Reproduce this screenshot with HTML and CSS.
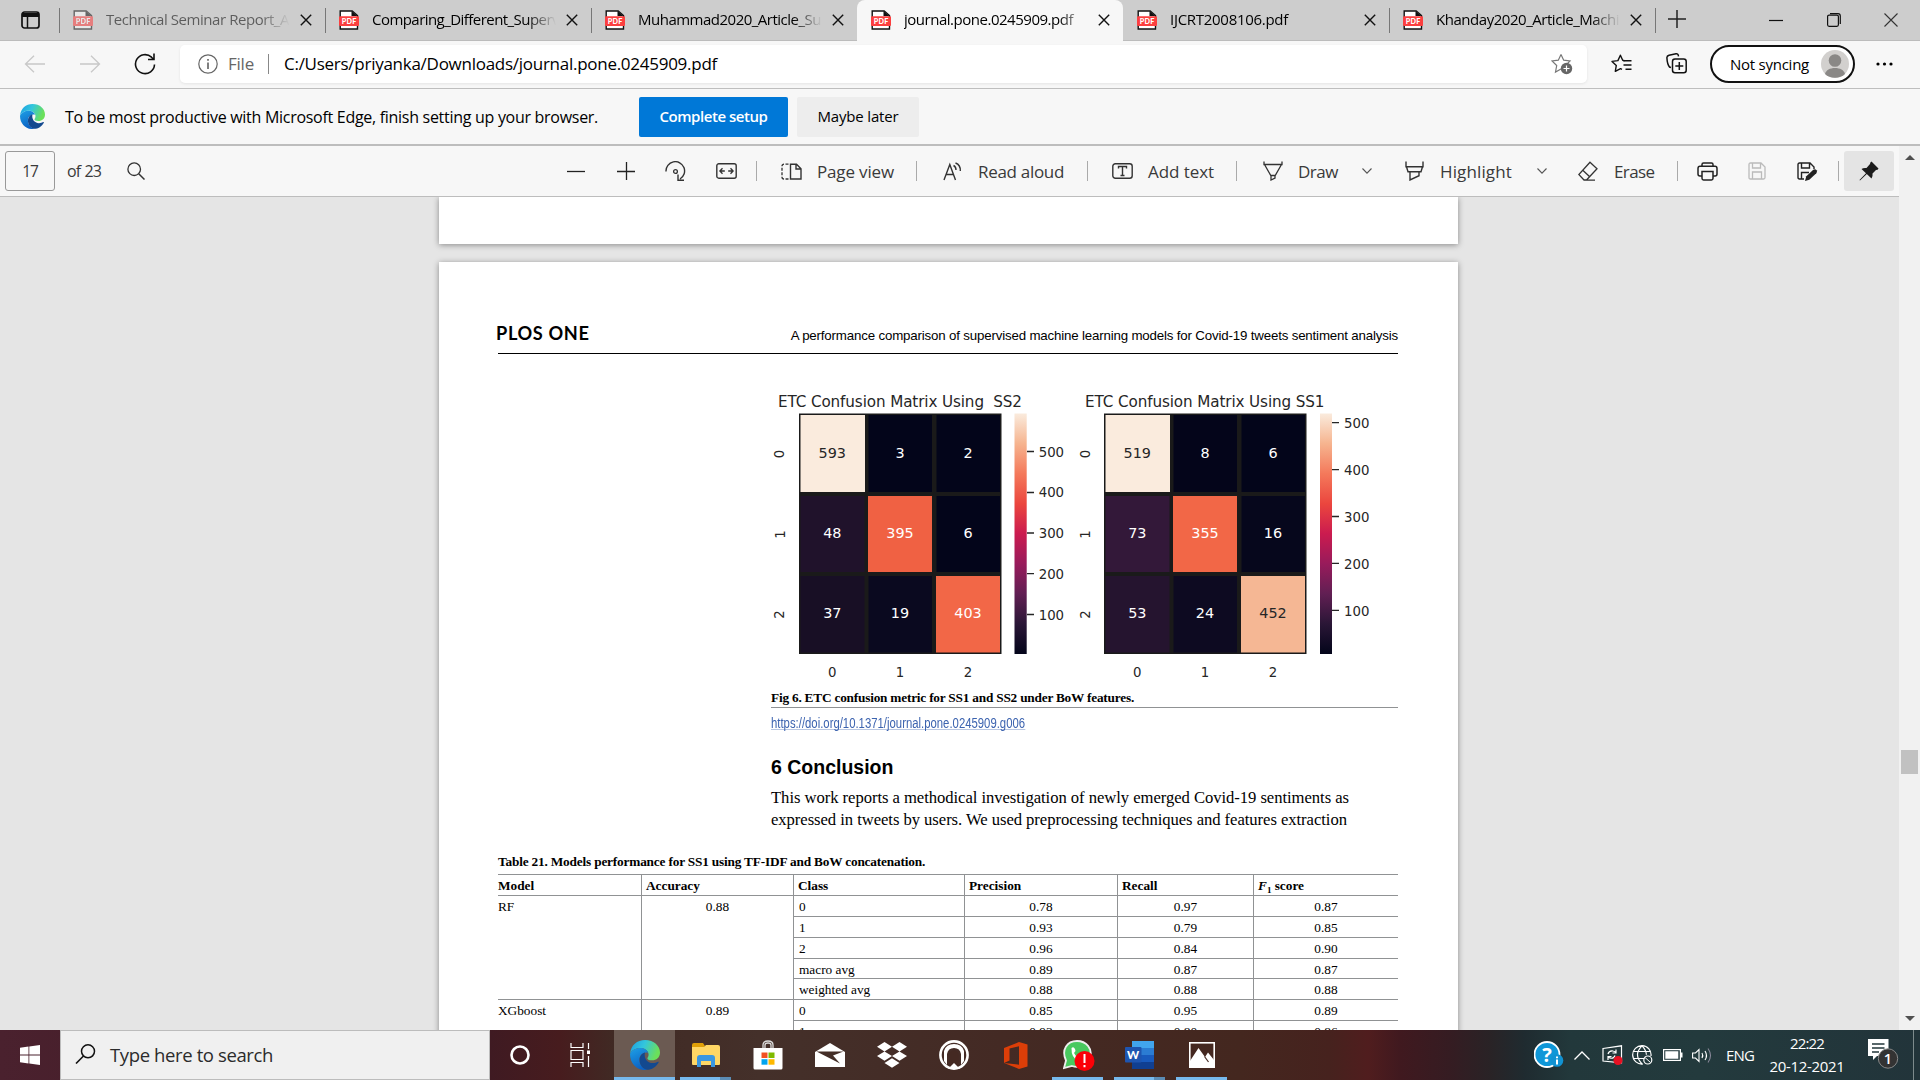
FILE: index.html
```
<!DOCTYPE html>
<html lang="en">
<head>
<meta charset="utf-8">
<title>journal.pone.0245909.pdf</title>
<link rel="stylesheet" href="styles.css">
</head>
<body>
<svg class="defs" width="0" height="0" aria-hidden="true">
  <defs>
    <symbol id="pdf" viewBox="0 0 20 20">
      <path d="M1.200 1h12l5.300 4.500V19H1.200z" fill="#fff" stroke="#111" stroke-width="1.400"/>
      <path d="M12.500 1v5h6z" fill="#111"/>
      <rect x="0" y="6.300" width="20" height="9.700" rx="1" fill="#fb3f3f"/>
      <text x="10" y="13.700" text-anchor="middle" textLength="14.500" font-family="Lato" font-weight="900" font-size="7.200" fill="#fff">PDF</text>
    </symbol>
    <symbol id="x" viewBox="0 0 12 12"><path d="M.8.8l10.400 10.400M11.200.8L.8 11.200" stroke="#111" stroke-width="1.400" fill="none"/></symbol>
    <symbol id="chev" viewBox="0 0 10 6"><path d="M.5.500L5 5.200 9.500.5" stroke="#555" stroke-width="1.100" fill="none"/></symbol>
    <linearGradient id="edgeA" x1="0" y1="0" x2="1" y2="0.300"><stop offset="0" stop-color="#1b9de2"/><stop offset=".5" stop-color="#33c6dd"/><stop offset="1" stop-color="#6be05a"/></linearGradient>
    <linearGradient id="edgeB" x1="0" y1="0" x2="0.400" y2="1"><stop offset="0" stop-color="#1ea0e6"/><stop offset="1" stop-color="#0b62c4"/></linearGradient>
    <symbol id="edge" viewBox="0 0 30 30">
      <path d="M0 14C1 5 7 0 15 0c9 0 15 6 15 12.500 0 5-3.500 7.800-8 7.800-3.500 0-4.600-1-4.600-1.800 0-.9 1.200-1.500 1.200-4C18.600 11 15 8 10.500 8 5.500 8 1.500 10.500 0 14z" fill="url(#edgeA)"/>
      <path d="M0 14c1.500-3.500 5.500-6 10.500-6 4 0 6.800 2.200 7.700 4.700-5-1-8.700 2.300-8.700 7 0 5.300 4 9.300 8.500 10.100C8 31.500 0 24.500 0 14z" fill="url(#edgeB)"/>
      <path d="M9.500 19.700c0-3.500 2.300-6.500 5.500-7.300-1.400 5.600 2.200 10.600 7.800 10.600 2 0 3.700-.5 5.200-1.300.5-.2.900.2.600.7-2.400 4.200-6.800 7.400-11.600 7.400-4.500-1-7.500-5.300-7.500-10.100z" fill="#13498f"/>
    </symbol>
    <linearGradient id="rocket" x1="0" y1="1" x2="0" y2="0">
      <stop offset="0" stop-color="#03051a"/><stop offset=".125" stop-color="#2a1636"/><stop offset=".25" stop-color="#611f53"/>
      <stop offset=".375" stop-color="#981b5b"/><stop offset=".5" stop-color="#cb1b4f"/><stop offset=".625" stop-color="#eb463e"/>
      <stop offset=".75" stop-color="#f4795b"/><stop offset=".875" stop-color="#f6b48f"/><stop offset="1" stop-color="#faebdd"/>
    </linearGradient>
  </defs>
</svg>

<header class="tabs">
  <div class="tab-actions"><svg width="19" height="18" viewBox="0 0 19 18"><rect x="1" y="1" width="17" height="16" rx="2.500" fill="none" stroke="#111" stroke-width="1.700"/><path d="M1 2h17v4H1z" fill="#111"/><path d="M6.500 5v12" stroke="#111" stroke-width="1.500"/></svg></div>
  <div class="tab dim"><svg class="pdf"><use href="#pdf"/></svg><span class="title"><i class="t-tab1">Technical Seminar Report_A</i></span><svg class="close"><use href="#x"/></svg></div>
  <div class="tab"><svg class="pdf"><use href="#pdf"/></svg><span class="title"><i class="t-tab2">Comparing_Different_Superv</i></span><svg class="close"><use href="#x"/></svg></div>
  <div class="tab"><svg class="pdf"><use href="#pdf"/></svg><span class="title"><i class="t-tab3">Muhammad2020_Article_Su</i></span><svg class="close"><use href="#x"/></svg></div>
  <div class="tab active"><svg class="pdf"><use href="#pdf"/></svg><span class="title"><i class="t-tab4">journal.pone.0245909.pdf</i></span><svg class="close"><use href="#x"/></svg></div>
  <div class="tab first"><svg class="pdf"><use href="#pdf"/></svg><span class="title"><i class="t-tab5">IJCRT2008106.pdf</i></span><svg class="close"><use href="#x"/></svg></div>
  <div class="tab"><svg class="pdf"><use href="#pdf"/></svg><span class="title"><i class="t-tab6">Khanday2020_Article_Machi</i></span><svg class="close"><use href="#x"/></svg></div>
  <div class="new-tab"><svg width="18" height="18" viewBox="0 0 18 18"><path d="M9 0v18M0 9h18" stroke="#222" stroke-width="1.500"/></svg></div>
  <div class="win"><svg width="14" height="14" viewBox="0 0 14 14"><path d="M0 7.500h14" stroke="#111" stroke-width="1.200"/></svg>
  <svg width="14" height="14" viewBox="0 0 14 14"><rect x=".6" y="2.100" width="10.800" height="11.200" rx="1.500" fill="none" stroke="#111" stroke-width="1.200"/><path d="M3 .6h8a2.300 2.300 0 0 1 2.300 2.300V11" fill="none" stroke="#111" stroke-width="1.200"/></svg>
  <svg width="14" height="14" viewBox="0 0 14 14"><path d="M.5.500l13 13M13.500.5l-13 13" stroke="#333" stroke-width="1.100"/></svg></div>
</header>

<nav class="address">
  <svg width="22" height="18" viewBox="0 0 22 18"><path d="M21 9H1.500M10 .7L1.500 9l8.500 8.300" fill="none" stroke="#c8c8c8" stroke-width="1.300"/></svg>
  <svg width="22" height="18" viewBox="0 0 22 18"><path d="M1 9h19.500M12 .7L20.500 9 12 17.300" fill="none" stroke="#c8c8c8" stroke-width="1.300"/></svg>
  <svg width="22" height="22" viewBox="0 0 22 22"><path d="M20.500 11.500a9.500 9.500 0 1 1-3-7.300l2 2M20 .5v6h-6" fill="none" stroke="#111" stroke-width="1.600"/></svg>
  <div class="url">
    <svg width="20" height="20" viewBox="0 0 20 20"><circle cx="10" cy="10" r="9.200" fill="none" stroke="#666" stroke-width="1.200"/><path d="M10 8.500v6.500M10 5v1.700" stroke="#555" stroke-width="1.500"/></svg>
    <span class="file">File</span><b class="bar"></b><span class="path">C:/Users/priyanka/Downloads/journal.pone.0245909.pdf</span>
    <svg class="fav" width="22" height="22" viewBox="0 0 22 22"><path d="M10 1.500l2.700 5.700 6.300.8-3 3M10 16l-5.500 3 1.200-6.500L1 8l6.300-.8L10 1.500" fill="none" stroke="#777" stroke-width="1.200"/><circle cx="15.500" cy="15.500" r="5.700" fill="#666"/><path d="M15.500 12.500v6M12.500 15.500h6" stroke="#fff" stroke-width="1.200"/></svg>
  </div>
  <svg width="21" height="20" viewBox="0 0 21 20"><path d="M13.500 6.700l-1.800-.4L9.400 1.200 6.900 6.600l-5.900.8 4.300 4-1 6 5.200-2.800 1.500.8" fill="none" stroke="#111" stroke-width="1.400" stroke-linejoin="round"/><path d="M12.500 6.800h8M12.500 11h8M14.500 15.200h6" stroke="#111" stroke-width="1.400"/></svg>
  <svg width="21" height="21" viewBox="0 0 21 21"><rect x="6.500" y="6" width="13.700" height="13.800" rx="2.500" fill="none" stroke="#111" stroke-width="1.500"/><path d="M13.300 9v8M9.300 13h8M5 14.500L3.500 14C1 11 1 6 .9 4.500 1 3 2 2.500 3 2.200L10 .8c1.500-.2 2.300.7 2.500 2.500" fill="none" stroke="#111" stroke-width="1.500"/></svg>
  <div class="profile"><span>Not syncing</span><svg width="28" height="28" viewBox="0 0 28 28"><circle cx="14" cy="14" r="14" fill="#d2d0ce"/><circle cx="14" cy="10.500" r="6.300" fill="#8a8886"/><path d="M4 24c1-4 5-6 10-6s9 2 10 6c-5 5-15 5-20 0z" fill="#8a8886"/></svg></div>
  <svg width="17" height="4" viewBox="0 0 17 4"><circle cx="2" cy="2" r="1.600"/><circle cx="8.500" cy="2" r="1.600"/><circle cx="15" cy="2" r="1.600"/></svg>
</nav>

<section class="infobar">
  <svg width="25" height="25"><use href="#edge"/></svg>
  <span class="msg">To be most productive with Microsoft Edge, finish setting up your browser.</span>
  <span class="btn primary">Complete setup</span>
  <span class="btn later">Maybe later</span>
</section>

<main class="viewer">
  <div class="content">
    <div class="pdfbar">
      <span class="pageno">17</span>
      <span class="t-of">of 23</span>
      <svg width="18" height="18" viewBox="0 0 18 18"><circle cx="7.200" cy="7.200" r="6.300" fill="none" stroke="#333" stroke-width="1.300"/><path d="M11.700 11.700l5.800 5.800" stroke="#333" stroke-width="1.500"/></svg>
      <svg width="18" height="18" viewBox="0 0 18 18"><path d="M0 9.500h18" stroke="#222" stroke-width="1.300"/></svg>
      <svg width="18" height="18" viewBox="0 0 18 18"><path d="M0 9.500h18M9.500 0v18" stroke="#222" stroke-width="1.300"/></svg>
      <svg width="21" height="20" viewBox="0 0 21 20"><path d="M1 10.500a9.300 9.300 0 1 1 14 7.500M13 13.500v5.700h6" fill="none" stroke="#333" stroke-width="1.400"/><circle cx="10.500" cy="10.500" r="1.900" fill="none" stroke="#333" stroke-width="1.300"/></svg>
      <svg width="21" height="16" viewBox="0 0 21 16"><rect x=".8" y=".8" width="19.400" height="14.400" rx="2" fill="none" stroke="#333" stroke-width="1.400"/><path d="M4 8h4.800M6.500 5.300L3.900 8l2.600 2.700M17 8h-4.800M14.500 5.300L17.100 8l-2.600 2.700" fill="none" stroke="#333" stroke-width="1.300"/></svg>
      <b class="sep"></b>
      <svg width="21" height="17" viewBox="0 0 21 17"><path d="M9.500 1.200h6l4.500 4.500V16H9.500zM15 1v5h5" fill="none" stroke="#333" stroke-width="1.400"/><path d="M7.500 1.200H3a2 2 0 0 0-2 2V14a2 2 0 0 0 2 2h4.500" fill="none" stroke="#333" stroke-width="1.300" stroke-dasharray="3 1.500"/></svg>
      <span class="t-pv">Page view</span>
      <b class="sep"></b>
      <svg width="20" height="19" viewBox="0 0 20 19"><path d="M1 18L6.800 2.500 12.500 18M3 12.500h7.700M10.500 3.500c2 .8 2.500 3 2.500 4.500M12.500 1c4 1.500 5 5 4.800 8" fill="none" stroke="#333" stroke-width="1.400"/></svg>
      <span class="t-ra">Read aloud</span>
      <b class="sep"></b>
      <svg width="21" height="16" viewBox="0 0 21 16"><rect x=".8" y=".8" width="19.400" height="14.400" rx="2.500" fill="none" stroke="#333" stroke-width="1.400"/><path d="M6.500 5.500v-2h8v2M10.500 3.500v9M8.500 12.500h4" fill="none" stroke="#333" stroke-width="1.400"/></svg>
      <span class="t-at">Add text</span>
      <b class="sep"></b>
      <svg width="20" height="20" viewBox="0 0 20 20"><path d="M1 .5v3h18v-3M1.500 3.500L8 15v4l4-2v-2l6.500-11.500M8 14.500h4" fill="none" stroke="#333" stroke-width="1.300"/></svg>
      <span class="t-dr">Draw</span>
      <svg width="10" height="6"><use href="#chev"/></svg>
      <svg width="19" height="20" viewBox="0 0 19 20"><path d="M1 .5v5.200h17V.5M1.500 5.700l1.500 5h13l1.500-5M5 10.700V19l9-4.300v-4" fill="none" stroke="#333" stroke-width="1.400"/></svg>
      <span class="t-hi">Highlight</span>
      <svg width="10" height="6"><use href="#chev"/></svg>
      <svg width="20" height="20" viewBox="0 0 20 20"><path d="M12 1.200l7 6.500L8.500 19H6L.8 13.500zM4.500 9l7.500 7M8 19.200h9" fill="none" stroke="#333" stroke-width="1.300"/></svg>
      <span class="t-er">Erase</span>
      <b class="sep"></b>
      <svg width="21" height="19" viewBox="0 0 21 19"><path d="M5 4V2.500Q5 1 6.500 1h8Q16 1 16 2.500V4M5 14H3q-2 0-2-2V6.500Q1 4.300 3 4.300h15q2 0 2 2.200V12q0 2-2 2h-2M5 9.500h11v6.800q0 1.700-1.500 1.700h-8Q5 18 5 16.300z" fill="none" stroke="#222" stroke-width="1.500"/></svg>
      <svg width="18" height="18" viewBox="0 0 18 18"><path d="M1 2.500Q1 1 2.500 1H13l4 4v10.500q0 1.500-1.500 1.500h-13Q1 17 1 15.500zM4.500 1v5h8V1M4.500 17v-7h9v7" fill="none" stroke="#bbb" stroke-width="1.300"/></svg>
      <svg width="21" height="19" viewBox="0 0 21 19"><path d="M7 17H2.500Q1 17 1 15.500v-13Q1 1 2.500 1H13l4 4v2M4.500 1v5h8V1M4.500 17v-6.500H12" fill="none" stroke="#222" stroke-width="1.400"/><path d="M8 19l1.300-4.800 7-6.500q2-1 3.300.5 1 1.600-.3 3l-7 6.600z" fill="#222"/></svg>
      <b class="sep"></b>
      <span class="pin"><svg width="20" height="20" viewBox="0 0 20 20"><path d="M12.500.5l7 7q-.5 1.500-2.500 1.500l-3.500 3.500q.5 3-1 5L7.800 13 1 19.500.5 19 7 12.200 2.500 8q2-1.500 5-1L11 3Q11 1 12.500.5z" fill="#1b1b1b"/></svg></span>
    </div>

    <div class="pages">
      <div class="page prev"></div>
      <article class="page">
        <header class="runhead"><span class="plos">PLOS ONE</span><span class="rh">A performance comparison of supervised machine learning models for Covid-19 tweets sentiment analysis</span></header>
        <div class="col">
          <svg class="figure" width="627" height="336" viewBox="771 354 627 336">
            <text class="ct" x="778" y="406.500" textLength="244" xml:space="preserve">ETC Confusion Matrix Using  SS2</text>
            <rect x="799" y="413.500" width="202.500" height="240.500" fill="#1a1a1a"/>
            <g>
              <rect x="800.500" y="415" width="64.500" height="77" fill="#faebdd"/><rect x="868.500" y="415" width="63.500" height="77" fill="#03051a"/><rect x="936.500" y="415" width="63.500" height="77" fill="#03051a"/>
              <rect x="800.500" y="496" width="64" height="76" fill="#20122b"/><rect x="868" y="496" width="64" height="76" fill="#f06143"/><rect x="936.500" y="496" width="63.500" height="76" fill="#03051a"/>
              <rect x="800.500" y="576" width="64" height="76.500" fill="#180f25"/><rect x="868.500" y="576" width="63.500" height="76.500" fill="#0a091f"/><rect x="936" y="576" width="64" height="76.500" fill="#f26747"/>
            </g>
            <g class="cv"><text class="dk" x="832.300" y="458">593</text><text x="900" y="458">3</text><text x="968" y="458">2</text><text x="832.300" y="538.300">48</text><text x="900" y="538.300">395</text><text x="968" y="538.300">6</text><text x="832.300" y="618.300">37</text><text x="900" y="618.300">19</text><text x="968" y="618.300">403</text></g>
            <g class="ax"><text x="832.300" y="676.500">0</text><text x="900" y="676.500">1</text><text x="968" y="676.500">2</text>
              <text transform="translate(784 454) rotate(-90)">0</text><text transform="translate(785 534.500) rotate(-90)">1</text><text transform="translate(784 614.500) rotate(-90)">2</text></g>
            <rect x="1014.500" y="413.500" width="12.200" height="240.500" fill="url(#rocket)"/>
            <path d="M1027 451.500h7M1027 492.500h7M1027 533h7M1027 573.700h7M1027 614.500h7" stroke="#262626" stroke-width="1.300"/>
            <g class="tk"><text x="1038.700" y="456.800">500</text><text x="1038.700" y="497.300">400</text><text x="1038.700" y="538">300</text><text x="1038.700" y="578.800">200</text><text x="1038.700" y="619.500">100</text></g>

            <text class="ct" x="1085" y="406.500" textLength="239.500">ETC Confusion Matrix Using SS1</text>
            <rect x="1104" y="413.500" width="202.500" height="240.500" fill="#1a1a1a"/>
            <g>
              <rect x="1105.500" y="415" width="64.500" height="77" fill="#faebdd"/><rect x="1173.500" y="415" width="63.500" height="77" fill="#04051a"/><rect x="1241.500" y="415" width="63.500" height="77" fill="#03051a"/>
              <rect x="1105.500" y="496" width="64" height="76" fill="#331839"/><rect x="1173" y="496" width="64" height="76" fill="#f26747"/><rect x="1241.500" y="496" width="63.500" height="76" fill="#06071c"/>
              <rect x="1105.500" y="576" width="64" height="76.500" fill="#25142f"/><rect x="1173.500" y="576" width="63.500" height="76.500" fill="#0d0a21"/><rect x="1241" y="576" width="64" height="76.500" fill="#f5b794"/>
            </g>
            <g class="cv"><text class="dk" x="1137.300" y="458">519</text><text x="1205" y="458">8</text><text x="1273" y="458">6</text><text x="1137.300" y="538.300">73</text><text x="1205" y="538.300">355</text><text x="1273" y="538.300">16</text><text x="1137.300" y="618.300">53</text><text x="1205" y="618.300">24</text><text class="dk" x="1273" y="618.300">452</text></g>
            <g class="ax"><text x="1137.300" y="676.500">0</text><text x="1205" y="676.500">1</text><text x="1273" y="676.500">2</text>
              <text transform="translate(1089.500 454) rotate(-90)">0</text><text transform="translate(1090 534.500) rotate(-90)">1</text><text transform="translate(1089.500 614.500) rotate(-90)">2</text></g>
            <rect x="1320" y="413.500" width="12" height="240.500" fill="url(#rocket)"/>
            <path d="M1332 422.700h7M1332 469.700h7M1332 516.500h7M1332 563.300h7M1332 610.300h7" stroke="#262626" stroke-width="1.300"/>
            <g class="tk"><text x="1344" y="428">500</text><text x="1344" y="475">400</text><text x="1344" y="521.800">300</text><text x="1344" y="568.700">200</text><text x="1344" y="615.500">100</text></g>
          </svg>
          <p class="figcap">Fig 6. ETC confusion metric for SS1 and SS2 under BoW features.</p>
          <p class="doi"><span>https://doi.org/10.1371/journal.pone.0245909.g006</span></p>
          <h2>6 Conclusion</h2>
          <p class="para">This work reports a methodical investigation of newly emerged Covid-19 sentiments as<br>expressed in tweets by users. We used preprocessing techniques and features extraction</p>
        </div>
        <p class="tabcap">Table 21. Models performance for SS1 using TF-IDF and BoW concatenation.</p>
        <table>
          <colgroup><col class="c1"><col class="c2"><col class="c3"><col class="c4"><col class="c5"><col class="c6"></colgroup>
          <tr><th>Model</th><th>Accuracy</th><th>Class</th><th>Precision</th><th>Recall</th><th><em>F</em><sub>1</sub> score</th></tr>
          <tr><td rowspan="5">RF</td><td rowspan="5" class="n">0.88</td><td>0</td><td class="n">0.78</td><td class="n">0.97</td><td class="n">0.87</td></tr>
          <tr><td>1</td><td class="n">0.93</td><td class="n">0.79</td><td class="n">0.85</td></tr>
          <tr><td>2</td><td class="n">0.96</td><td class="n">0.84</td><td class="n">0.90</td></tr>
          <tr class="short"><td>macro avg</td><td class="n">0.89</td><td class="n">0.87</td><td class="n">0.87</td></tr>
          <tr><td>weighted avg</td><td class="n">0.88</td><td class="n">0.88</td><td class="n">0.88</td></tr>
          <tr><td rowspan="2">XGboost</td><td rowspan="2" class="n">0.89</td><td>0</td><td class="n">0.85</td><td class="n">0.95</td><td class="n">0.89</td></tr>
          <tr><td>1</td><td class="n">0.93</td><td class="n">0.80</td><td class="n">0.86</td></tr>
        </table>
      </article>
    </div>
  </div>
  <div class="scroll"><i class="up"></i><i class="thumb"></i><i class="down"></i></div>
</main>

<footer class="taskbar">
  <div class="start"><svg width="20" height="20" viewBox="0 0 20 20"><path d="M0 2.800l8.500-1.200v8H0zM9.300 1.500L20 0v9.600H9.300zM0 10.400h8.500v8L0 17.200zM9.300 10.400H20V20L9.300 18.500z" fill="#fff"/></svg></div>
  <div class="search"><svg width="21" height="20" viewBox="0 0 21 20"><circle cx="13" cy="7.300" r="6.500" fill="none" stroke="#111" stroke-width="1.500"/><path d="M8.500 12L1 19.500" stroke="#111" stroke-width="1.600"/></svg><span>Type here to search</span></div>
  <div class="app cort"><svg width="20" height="20" viewBox="0 0 20 20"><circle cx="10" cy="10" r="8.500" fill="none" stroke="#fff" stroke-width="2.600"/></svg></div>
  <div class="app tv"><svg width="21" height="24" viewBox="0 0 21 24"><path d="M1 0v4.500h12V0M1 7.500h12v9H1zM1 24v-4.500h12V24M18.500 0v6M18.500 13v11" fill="none" stroke="#fff" stroke-width="1.200"/><path d="M17 7.500h3v3.500h-3z" fill="#fff"/></svg></div>
  <div class="app on wide"><svg width="30" height="30"><use href="#edge"/></svg></div>
  <div class="app run more"><svg width="28" height="24" viewBox="0 0 28 24"><path d="M0 2q0-2 2-2h9l2 3-2 4H0z" fill="#e0a008"/><path d="M0 4h12l2-2h12q2 0 2 2v17q0 1-1 1H1q-1 0-1-1z" fill="#ffd765"/><path d="M5 24V15q0-3 3-3h12q3 0 3 3v9h-4v-6H9v6z" fill="#3b97e0"/></svg></div>
  <div class="app"><svg width="30" height="30" viewBox="0 0 30 30"><path d="M10 8V5q0-4 5-4t5 4v3M12 8V5q0-2 3-2t3 2v3" fill="none" stroke="#ddd" stroke-width="1.300"/><path d="M.5 8h29v20q0 1.500-1.500 1.500H2Q.5 29.500.5 28z" fill="#fff"/><path d="M8.500 12.500h6v5.500h-6z" fill="#f25022"/><path d="M15.500 12.500h6v5.500h-6z" fill="#7fba00"/><path d="M8.500 19.200h6v5.500h-6z" fill="#00a4ef"/><path d="M15.500 19.200h6v5.500h-6z" fill="#ffb900"/></svg></div>
  <div class="app"><svg width="30" height="24" viewBox="0 0 30 24"><path d="M0 9L15 0l15 9v15H0z" fill="#fff"/><path d="M1.500 8.500h27L18 12.500l7 8z" fill="#442e27"/></svg></div>
  <div class="app"><svg width="30" height="26" viewBox="0 0 30 26"><path d="M7.500 0L15 4.700 7.500 9.400 0 4.700zM22.500 0L30 4.700l-7.500 4.700L15 4.700zM7.500 9.400L15 14.100 7.500 18.800 0 14.100zM22.500 9.400L30 14.100l-7.500 4.700L15 14.100zM15 16.300l7.500 4.700L15 25.700 7.500 21z" fill="#fff"/></svg></div>
  <div class="app"><svg width="30" height="30" viewBox="0 0 30 30"><circle cx="15" cy="15" r="13.600" fill="none" stroke="#fff" stroke-width="2.600"/><path d="M5 21V11q2-7 10-7t10 7v10l-3 4V14q-1-6-7-6t-7 6v11z" fill="#fff"/><path d="M10.500 26V14q1-3.500 4.500-3.500t4.500 3.500v12L15 22z" fill="#442922"/><path d="M9 29l6-6 6 6z" fill="#fff"/></svg></div>
  <div class="app"><svg width="24" height="27" viewBox="0 0 24 27"><path d="M0 6L15 0l8.500 2.500v22L15 27 0 21l15 1.700V4.300L5.500 6.500v12L0 21z" fill="#dc3e08"/></svg></div>
  <div class="app run wa"><svg width="32" height="31" viewBox="0 0 32 31"><path d="M1 28l2-7.500C-2 10 4 1 14 1s15 8 13.500 15S18 29 9 26z" fill="#48c95f" stroke="#eee" stroke-width="1.800"/><path d="M8.500 8q2-2 3.500 1l.5 2-1.500 2q2 4 5 5.500l2-1.500 3 1.500q-1 4-5 3Q8 18 8.500 8z" fill="#fff"/><circle cx="21.500" cy="21" r="10" fill="#fb0007"/><path d="M21.500 14v9M21.500 25v2.300" stroke="#fff" stroke-width="2"/></svg></div>
  <div class="app run more"><svg width="30" height="28" viewBox="0 0 30 28"><path d="M7 0h22v7H7z" fill="#41a5ee"/><path d="M7 7h22v7H7z" fill="#2b7cd3"/><path d="M7 14h22v7H7z" fill="#185abd"/><path d="M7 21h22v7H7z" fill="#103f91"/><rect y="6" width="16.500" height="15.500" rx="1" fill="#1e55b0"/><text x="8.200" y="18" text-anchor="middle" font-family="Lato" font-weight="900" font-size="11.500" fill="#fff">W</text></svg></div>
  <div class="app run"><svg width="26" height="26" viewBox="0 0 26 26"><rect x=".8" y=".8" width="24.400" height="24.400" fill="none" stroke="#fff" stroke-width="1.600"/><path d="M1 19L9.500 6l6.500 9 3-4.500L25 18v7H1z" fill="#fff"/><path d="M15.500 14.500l4 5.500" stroke="#442922" stroke-width="1.200"/></svg></div>
  <div class="tray">
    <svg width="30" height="28" viewBox="0 0 30 28"><circle cx="13" cy="13.500" r="12.500" fill="#0f97d8" stroke="#fff" stroke-width="1.800"/><text x="13" y="21" text-anchor="middle" font-family="Open Sans" font-weight="700" font-size="20" fill="#fff">?</text><circle cx="23" cy="19.500" r="6.300" fill="#1192d2"/><path d="M23 18.500v5M23 15.500v1.700" stroke="#fff" stroke-width="2"/></svg>
    <svg width="16" height="9" viewBox="0 0 16 9"><path d="M.5 8.500L8 1l7.500 7.500" fill="none" stroke="#fff" stroke-width="1.300"/></svg>
    <svg width="21" height="20" viewBox="0 0 21 20"><path d="M1 3.500L19.500.8v17L1 16z" fill="none" stroke="#fff" stroke-width="1.200"/><path d="M6 9q1-3.500 5-3 2 .2 3 2M14 4.500V8h-3.500M13 10.500q-1 3-4 2.700-2-.2-2.800-1.700M6 15v-3.500h3.500" fill="none" stroke="#fff" stroke-width="1.200"/><circle cx="16" cy="15.500" r="4.500" fill="#e81123"/></svg>
    <svg width="21" height="20" viewBox="0 0 21 20"><path d="M11 19A9.200 9.200 0 1 1 19 11M1.500 6.500h17M1.500 13.500h11M10 .8c-6 6-6 12 0 18M10 .8c3 3 4.300 6 4.400 9" fill="none" stroke="#fff" stroke-width="1.200"/><circle cx="15.800" cy="15" r="4" fill="none" stroke="#fff" stroke-width="1.200"/><path d="M13 12.500l5.500 5" stroke="#fff"/></svg>
    <svg width="20" height="12" viewBox="0 0 20 12"><rect x=".6" y=".6" width="16.800" height="10.800" fill="none" stroke="#fff" stroke-width="1.200"/><path d="M2.300 2.300h13v7.400h-13zM18 3.500h1.500v5H18z" fill="#fff"/></svg>
    <svg width="20" height="17" viewBox="0 0 20 17"><path d="M.6 6h2.900L7 2.500v12L3.500 11H.6z" fill="none" stroke="#fff" stroke-width="1.100"/><path d="M10 6q1.500 2.500 0 5M13 4q3 4.500 0 9" fill="none" stroke="#fff" stroke-width="1.100"/><path d="M16 1.500q5 7 0 14" fill="none" stroke="#889" stroke-width="1.100"/></svg>
    <span class="t-eng">ENG</span>
    <div class="clock"><span class="t-time">22:22</span><span class="t-date">20-12-2021</span></div>
    <svg width="31" height="32" viewBox="0 0 31 32"><path d="M0 0h20.500v17H9l-4 4v-4H0z" fill="#fff"/><path d="M4 5h12.500M4 9h12.500M4 13h7" stroke="#22363a" stroke-width="1.300"/><circle cx="20" cy="19.500" r="9.700" fill="#333" stroke="#888" stroke-width="1"/><text x="20" y="25" text-anchor="middle" font-family="Open Sans" font-weight="600" font-size="14.500" fill="#fff">1</text></svg>
    <b class="desk"></b>
  </div>
</footer>
</body>
</html>
```
FILE: styles.css
```
* { box-sizing: border-box; }
body { margin: 0; width: 1920px; height: 1080px; overflow: hidden; display: flex; flex-direction: column; background: #f7f7f7; font-family: "Open Sans", sans-serif; color: #000; }
.defs { position: absolute; }
svg { display: block; flex: none; }
i { font-style: normal; }
span { white-space: nowrap; }

/* Tab strip */
.tabs { height: 41px; flex: none; display: flex; align-items: flex-start; background: #cdcdcd; border-bottom: 1px solid #bcbcbc; font-size: 15px; }
.tab-actions { width: 59px; height: 40px; padding: 11px 0 0 21px; }
.tab { width: 266px; height: 40px; display: flex; align-items: center; position: relative; padding: 0 0 2px 14px; }
.tab::before { content: ""; position: absolute; left: 0; top: 8px; width: 1px; height: 25px; background: #777; }
.pdf { width: 20px; height: 20px; margin-top: 1px; }
.title { width: 184px; margin-left: 13px; overflow: hidden; line-height: 24px; -webkit-mask-image: linear-gradient(90deg, #000 155px, transparent 184px); mask-image: linear-gradient(90deg, #000 155px, transparent 184px); }
.tab .close { width: 12px; height: 12px; margin: 2px 0 0 10px; }
.dim .pdf, .dim .title { opacity: .55; }
.active { background: #f7f7f7; height: 41px; border-radius: 8px 8px 0 0; padding-bottom: 3px; }
.active::before, .first::before { display: none; }
.new-tab { width: 60px; height: 40px; padding: 10px 0 0 13px; position: relative; }
.new-tab::before { content: ""; position: absolute; left: 0; top: 8px; width: 1px; height: 25px; background: #777; }
.win { margin-left: 54px; height: 39px; display: flex; align-items: center; gap: 43.500px; }
.t-tab1 { letter-spacing: -.445px; }
.t-tab2 { letter-spacing: -.547px; }
.t-tab3 { letter-spacing: -.501px; }
.t-tab4 { letter-spacing: -.481px; }
.t-tab5 { letter-spacing: -.286px; }
.t-tab6 { letter-spacing: -.461px; }

/* Address bar */
.address { height: 48px; flex: none; display: grid; grid-template-columns: 55px 55px 46px 1431px 55px 44px 166px 46px; align-items: center; padding: 0 0 2px 24px; border-bottom: 1px solid #bebebe; }
.url { width: 1407px; height: 38px; background: #fff; border-radius: 5px; display: flex; align-items: center; padding-left: 18px; box-shadow: 0 1px 3px rgba(0,0,0,.08); }
.address .url { width: 1407px; }
.address > .url + svg { margin-left: 0; }
.file { margin-left: 10px; color: #666; font-size: 17px; width: 27px; letter-spacing: -.227px; }
.bar { width: 1px; height: 20px; background: #888; margin: 0 15px 0 13px; }
.path { font-size: 17px; letter-spacing: -.267px; }
.fav { margin-left: auto; margin-right: 14px; }
.profile { width: 145px; height: 38px; border: 2px solid #111; border-radius: 19px; display: flex; align-items: center; justify-content: space-between; padding: 0 4px 0 18px; background: #fff; font-size: 15px; letter-spacing: -.25px; }

/* Setup message */
.infobar { height: 57px; flex: none; display: flex; align-items: center; padding-left: 20px; border-bottom: 2px solid #bdbdbd; font-size: 16px; }
.msg { width: 533px; margin: 0 41px 0 20px; letter-spacing: -.287px; }
.btn { height: 40px; line-height: 39px; width: 122px; background: #ededed; border-radius: 2px; text-align: center; font-size: 15px; font-weight: 600; }
.btn.primary { width: 149px; margin-right: 9px; background: #0078d7; color: #fff; letter-spacing: -.454px; }
.btn.later { font-weight: 500; letter-spacing: -.169px; }

/* Viewer */
.viewer { flex: none; height: 884px; display: flex; }
.content { width: 1899px; display: flex; flex-direction: column; background: #e5e5e5; overflow: hidden; }
.pdfbar { height: 51px; flex: none; background: #f7f7f7; border-bottom: 1px solid #bdbdbd; padding-left: 5px; display: grid; align-items: center; font-size: 17px; color: #3a3a3a;
  grid-template-columns: 62px 60px 440px 50px 48px 51px 40px 25px 36px 99px 27px 35px 109px 25px 36px 88px 27px 35px 64px 43px 35px 97px 41px 36px 63px 20px 51px 49px 41px 6px 50px; }
.pageno { width: 50px; height: 40px; line-height: 38px; border: 1px solid #999; border-radius: 3px; text-align: center; font-size: 15.500px; letter-spacing: -1px; }
.t-of { font-size: 16px; letter-spacing: -.88px; word-spacing: 1px; }
.t-pv { letter-spacing: -.153px; }
.t-ra { letter-spacing: -.309px; }
.t-at { letter-spacing: -.066px; }
.t-dr { letter-spacing: -.477px; }
.t-hi { letter-spacing: .135px; }
.t-er { letter-spacing: -.6px; }
.sep { width: 1px; height: 20px; background: #aaa; }
.pin { width: 50px; height: 40px; background: #e4e4e4; border-radius: 3px; display: flex; align-items: center; justify-content: center; }
.pages { flex: 1; padding-left: 439px; overflow: hidden; }
.page { width: 1019px; height: 900px; background: #fff; box-shadow: 0 1px 6px rgba(0,0,0,.4); padding: 0 60px 0 59px; }
.prev { height: 47px; margin-bottom: 18px; }
.scroll { width: 21px; background: #f1f1f1; display: flex; flex-direction: column; align-items: center; }
.up { margin-top: 9px; border: 5px solid transparent; border-top: 0; border-bottom-color: #505050; }
.thumb { width: 17px; height: 24px; background: #c1c1c1; margin-top: 590px; }
.down { margin-top: 242px; border: 5px solid transparent; border-bottom: 0; border-top-color: #505050; }

/* Paper */
.runhead { height: 92px; padding-top: 61px; display: flex; align-items: baseline; justify-content: space-between; border-bottom: 1px solid #000; line-height: 20px; }
.plos { font: 700 18.200px/20px Lato, sans-serif; letter-spacing: .64px; margin-left: -2px; }
.rh { font: 13.300px/20px "Liberation Sans", sans-serif; letter-spacing: -.17px; }
.col { margin-left: 273px; }
.figure { font-family: "DejaVu Sans", sans-serif; }
.figure .ct { font-size: 15.200px; fill: #262626; }
.cv { font-size: 14.400px; text-anchor: middle; fill: #fff; }
.cv .dk { fill: #262626; }
.ax { font-size: 13.300px; text-anchor: middle; fill: #262626; }
.tk { font-size: 13.300px; fill: #262626; }
p, h2 { margin: 0; white-space: nowrap; }
.figcap { height: 18px; font: 700 13.300px/16px "Liberation Serif", serif; letter-spacing: -.209px; border-bottom: 1px solid #909294; }
.doi { margin-top: 5px; height: 20px; font: 14px/20px "Liberation Sans", sans-serif; color: #3c63af; }
.doi span { display: inline-block; height: 17px; transform: scaleX(.81); transform-origin: 0 0; border-bottom: 1px solid #b9c7e2; }
h2 { margin-top: 22px; font: 700 19.500px/24px "Liberation Sans", sans-serif; }
.para { margin-top: 8px; height: 43px; font: 16.650px/21.500px "Liberation Serif", serif; letter-spacing: -.054px; }
.tabcap { margin-top: 24px; height: 20px; font: 700 13.300px/16px "Liberation Serif", serif; letter-spacing: -.181px; }
table { width: 900px; table-layout: fixed; border-collapse: separate; border-spacing: 0; border-top: 1px solid #909294; font: 13.300px/18px "Liberation Serif", serif; }
.c1 { width: 143px; } .c2 { width: 152px; } .c3 { width: 171px; } .c4 { width: 153px; } .c5 { width: 136px; } .c6 { width: 145px; }
th, td { height: 21px; padding: 2px 0 0 5px; border-left: 1px solid #909294; border-bottom: 1px solid #909294; text-align: left; vertical-align: top; }
th { padding-left: 4px; }
th:first-child, td[rowspan]:first-child { border-left: 0; padding-left: 0; }
.short td { height: 20px; line-height: 17px; }
td.n { text-align: center; padding: 2px 0 0; }
sub { font-size: 9px; line-height: 0; vertical-align: -3px; }

/* Taskbar */
.taskbar { height: 50px; flex: none; display: flex; color: #fff; background: linear-gradient(90deg, #4a212e 0, #3f1a22 490px, #471c1e 560px, #402a24 615px, #44302a 760px, #442a24 1000px, #44271f 1240px, #46221e 1330px, #501d1e 1368px, #40191f 1400px, #351c22 1450px, #292326 1490px, #1f2b30 1525px, #22383b 1570px, #233a3d 1700px, #22343a 1920px); }
.start { width: 60px; display: flex; align-items: center; justify-content: center; }
.search { width: 430px; background: #f0f0f0; border: 1px solid #bcbcbc; display: flex; align-items: center; padding: 0 0 2px 14px; color: #2b2b2b; font-size: 18.500px; letter-spacing: -.382px; }
.search span { margin-left: 14px; }
.app { width: 62px; display: flex; align-items: center; justify-content: center; position: relative; }
.cort { width: 60px; }
.tv { width: 64px; padding-right: 4px; }
.wide { width: 61px; }
.wa { padding-left: 2px; }
.on { background: #6b5a52; border-bottom: 3px solid #76b9ed; padding-top: 3px; }
.run::after { content: ""; position: absolute; left: 5px; right: 6px; bottom: 0; height: 3px; background: #76b9ed; }
.more::after { background: linear-gradient(90deg, #76b9ed 40px, #5b8cb4 40px); }
.tray { margin-left: auto; width: 386px; display: grid; grid-template-columns: 40px 28px 30px 31px 29px 34px 35px 107px 45px 7px; align-items: center; }
.t-eng { font-size: 15px; letter-spacing: -.85px; }
.t-time { font-size: 15px; letter-spacing: -.85px; }
.t-date { font-size: 15px; letter-spacing: -.33px; }
.clock { width: 92px; display: flex; flex-direction: column; align-items: center; line-height: 23px; }
.desk { width: 1px; height: 50px; background: #7d8a8c; }
```
